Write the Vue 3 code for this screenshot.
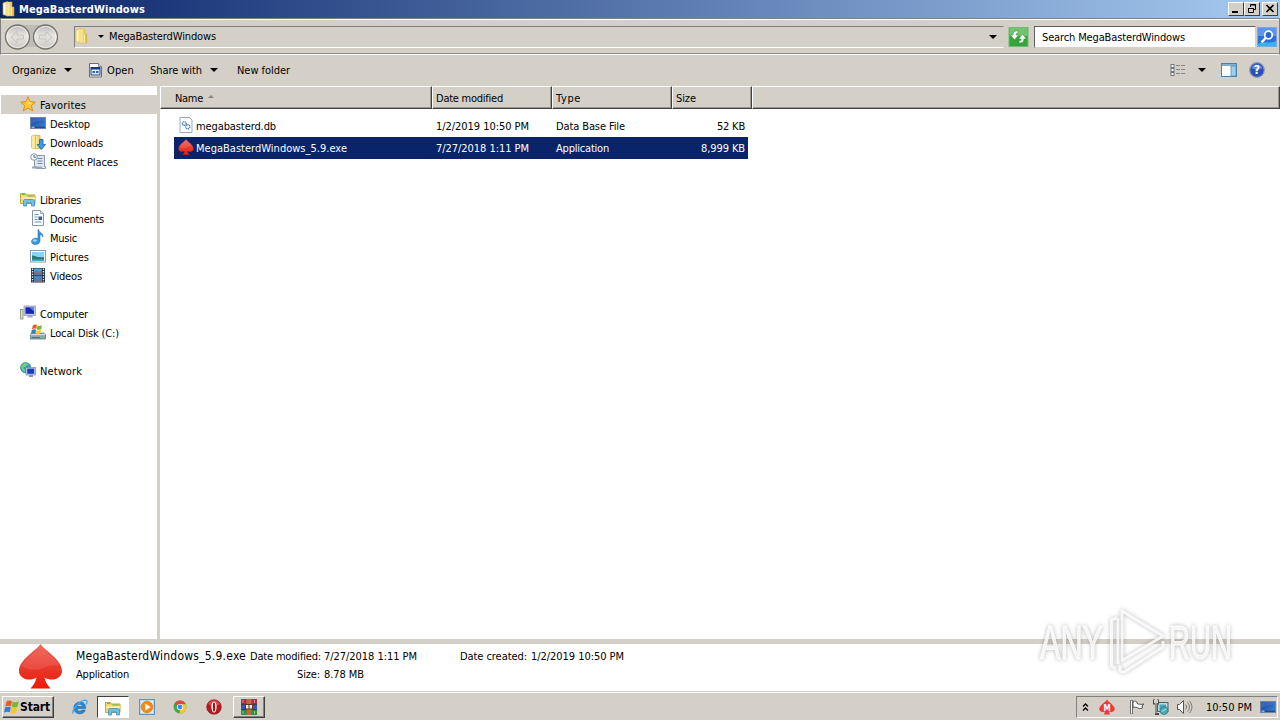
<template>
  <div class="desktop">
    <svg class="sprite" width="0" height="0">
      <defs>
        <linearGradient id="g-folder" x1="0" x2="1">
          <stop offset="0" stop-color="#fff3a8" />
          <stop offset="1" stop-color="#dcb43c" />
        </linearGradient>
        <linearGradient id="g-red" x1="0" y1="0" x2="0" y2="1">
          <stop offset="0" stop-color="#ef5b4d" />
          <stop offset="0.55" stop-color="#e8382a" />
          <stop offset="1" stop-color="#f01808" />
        </linearGradient>
        <linearGradient id="g-screen" x1="0" y1="0" x2="1" y2="1">
          <stop offset="0" stop-color="#143a90" />
          <stop offset="1" stop-color="#3c8ce0" />
        </linearGradient>
        <linearGradient id="g-ball" x1="0" y1="0" x2="0" y2="1">
          <stop offset="0" stop-color="#b9b7b3" />
          <stop offset="0.45" stop-color="#e9e7e3" />
          <stop offset="1" stop-color="#c9c6c0" />
        </linearGradient>
      </defs>
      <symbol id="folder" viewBox="0 0 16 16">
        <path d="M2 2 6.500.6v14.400L2 13.500z" fill="#fbeb9c" stroke="#dcb650" stroke-width=".6" />
        <path d="M6 1h5v5h2v9H6z" fill="url(#g-folder)" stroke="#d8b450" stroke-width=".5" />
        <path d="M3.500 3v10" stroke="#fff" stroke-width=".8" />
        <path d="M10.500 6.500v8" stroke="#fff6c0" stroke-width=".8" />
      </symbol>
      <symbol id="star" viewBox="0 0 16 16">
        <path d="M8 .8l2.100 4.800 5.200.5-3.900 3.500 1.200 5.200L8 12l-4.600 2.800 1.200-5.200L.7 6.100l5.200-.5z" fill="#ffc83a" stroke="#e08a1e" />
        <path d="M8 3l1.300 3.500 3 .4-3.300 1z" fill="#fff0a0" />
      </symbol>
      <symbol id="monitor" viewBox="0 0 16 16">
        <rect x=".5" y="2.500" width="15" height="11" fill="url(#g-screen)" stroke="#6f86a8" />
        <path d="M1 3h14v3C9 5 5 7 1 9z" fill="#4f82cf" opacity=".5" />
        <rect x="1" y="11.500" width="14" height="1.500" fill="#254c8a" />
        <rect x="1.500" y="11.500" width="3" height="1.500" fill="#78c0e8" />
      </symbol>
      <symbol id="downloads" viewBox="0 0 16 16">
        <path d="M1.500 2 6 .8v14L1.500 14z" fill="#fbeb9c" stroke="#d8b450" stroke-width=".7" />
        <path d="M5.500 1.500H10V5h2v9.500H5.500z" fill="url(#g-folder)" stroke="#d0a848" stroke-width=".7" />
        <path d="M9.500 5.500h3.500v5h2.500l-4.200 5-4.200-5h2.400z" fill="#3b9ae0" stroke="#1764a8" stroke-width=".8" />
      </symbol>
      <symbol id="recent" viewBox="0 0 16 16">
        <path d="M5.500 2.500h9v11h1v2H6v-2H4.500v-6z" fill="#dfe7f1" stroke="#8796aa" />
        <path d="M7.500 5.500h5M7.500 8h5M7.500 10.500h5" stroke="#7287a4" />
        <circle cx="4" cy="4" r="3.300" fill="#f3f6fa" stroke="#8c99aa" />
        <path d="M4 2v2.200h2" fill="none" stroke="#58708e" />
        <path d="M2 14.500h10" stroke="#9aa6b5" stroke-width="2" />
      </symbol>
      <symbol id="library" viewBox="0 0 16 16">
        <path d="M.5 2.500h5l1 1.500h8.500v8.500H.5z" fill="#f2da72" stroke="#c7a13c" />
        <path d="M2 3.500h3M7.500 5h6" stroke="#6fb34f" />
        <path d="M1 6.500h14v1.500H1z" fill="#fff3b0" />
        <path d="M4.500 8.500h8l2 1v5.500h-3v-3h-5v3h-3V9.500z" fill="#6fc0e6" stroke="#3f8fbd" stroke-width=".8" />
      </symbol>
      <symbol id="document" viewBox="0 0 16 16">
        <path d="M2.500.5h8l3 3v12h-11z" fill="#fcfdff" stroke="#8496ad" />
        <path d="M10.500.5v3h3" fill="#d6e2f0" stroke="#8496ad" stroke-width=".8" />
        <path d="M4.500 4.500h4M4.500 7h3M4.500 9.500h3M4.500 12h7" stroke="#6e93c2" />
        <rect x="8.500" y="6.500" width="3.500" height="3.500" fill="#2e5da0" />
      </symbol>
      <symbol id="music" viewBox="0 0 16 16">
        <path d="M8.500.5c.6 3 5 3.600 4.500 7.500-.8-1.800-2-2.300-3-2.400v6.200c0 2.200-1.800 3.700-4.600 3.700S1.500 14 1.500 12.500 3.200 9.200 5.700 9.200c1 0 1.800.2 2.300.4V.5z" fill="#3596dc" stroke="#1d6fb4" stroke-width=".6" />
        <ellipse cx="4.800" cy="11.500" rx="2" ry="1.200" fill="#9bd4f6" />
      </symbol>
      <symbol id="picture" viewBox="0 0 16 16">
        <rect x=".5" y="2.500" width="15" height="11.500" fill="#fff" stroke="#8b98a8" />
        <rect x="2" y="4" width="12" height="8.500" fill="#8fd2f4" />
        <path d="M2 7.500c3 0 5 2.300 12 1.500v3.500H2z" fill="#20806e" />
        <path d="M2 11.200h12v1.300H2z" fill="#2f9fd0" />
      </symbol>
      <symbol id="video" viewBox="0 0 16 16">
        <rect x="1" y="1" width="14" height="14.500" fill="#26323f" />
        <rect x="4" y="1.500" width="8" height="6.200" fill="#4aa2dc" />
        <rect x="4" y="8.700" width="8" height="6.300" fill="#3c8cc8" />
        <path d="M4 5l3-2 2 2 3-2v4.700H4zM5 11l3 2 3-3v5H5z" fill="#86647c" opacity=".8" />
        <path d="M2.500 1.500V15M13.500 1.500V15" stroke="#e8eef4" stroke-width="1.300" stroke-dasharray="1.400 1.200" />
      </symbol>
      <symbol id="computer" viewBox="0 0 16 16">
        <rect x=".5" y="4.500" width="2.500" height="9.500" fill="#d7dfd0" stroke="#7f9272" stroke-width=".8" />
        <rect x="4" y="1" width="11.500" height="9.500" fill="#c0c6dd" stroke="#8d93b5" stroke-width=".7" />
        <rect x="5.500" y="2.300" width="8.500" height="6.500" fill="#1526b0" />
        <path d="M9 2.300h5v4z" fill="#6284e8" />
        <path d="M8 10.500h4l1 2H7z" fill="#a5a8c4" />
      </symbol>
      <symbol id="flag" viewBox="0 0 16 16">
        <path d="M2.500 2.500C4.500 1 6 1.200 8 2.200L7 7.300C5 6.300 3.200 6.500 1.200 7.800z" fill="#ee5a24" />
        <path d="M8.700 2.500c2 1 3.800.9 6-.3l-1.200 5.300c-2 1.200-3.800 1.200-5.800.2z" fill="#79b829" />
        <path d="M1 8.700C3 7.400 4.800 7.300 6.800 8.300l-1.100 5C4 12.300 2 12.400 0 13.700z" fill="#2c7fd4" />
        <path d="M7.500 8.600c2 1 3.800.9 5.900-.3l-1.200 5.300c-2 1.200-3.800 1-5.800.1z" fill="#fbc51f" />
      </symbol>
      <symbol id="disk" viewBox="0 0 16 16">
        <path d="M0 10.500 2 9h11.500l2 1.500V15H0z" fill="#8fa6ad" stroke="#566f78" stroke-width=".7" />
        <path d="M.5 10.700h14.500" stroke="#e0e9ec" />
        <path d="M2 13.500h8" stroke="#4f7480" />
        <rect x="12" y="12.500" width="2" height="1.300" fill="#5ad04a" />
        <use href="#flag" x="1" y="-.5" width="12" height="12" />
      </symbol>
      <symbol id="network" viewBox="0 0 16 16">
        <circle cx="5.700" cy="5.700" r="5.200" fill="#2d9fc6" stroke="#2470a0" stroke-width=".6" />
        <path d="M1.500 3.500C4 .5 7 1 9 2 6 3 6 5 3.500 5.500 4 8 6 8 4.500 10 2 9 1 6 1.500 3.500z" fill="#76cf74" />
        <rect x="6" y="5.500" width="9.500" height="7.500" fill="#d0d7ea" stroke="#7783a8" stroke-width=".7" />
        <rect x="7.200" y="6.600" width="7" height="5.200" fill="#1440c0" />
        <path d="M9 13h4v2H9z" fill="#7f95bd" />
      </symbol>
      <symbol id="spade" viewBox="0 0 44 46">
        <path d="M22 1C24 6 43.500 16 43.500 28 43.500 36 33 39 26 34.500c1 5 3 7.500 6 11H12c3-3.500 5-6 6-11C11 39 .5 36 .5 28 .5 16 20 6 22 1z" fill="url(#g-red)" />
        <path d="M22 2c3 6 15 12 19 21-7-3-13 1-19 3S8 26 3 23C8 14 19 8 22 2z" fill="#fff" opacity=".1" />
      </symbol>
      <symbol id="dbfile" viewBox="0 0 16 16">
        <path d="M2 .5h9.500l2.500 2.500v12.500H2z" fill="#fdfdfd" stroke="#8ea0b4" stroke-width=".9" />
        <circle cx="6.300" cy="6.500" r="1.900" fill="none" stroke="#4484bb" stroke-width="1.400" stroke-dasharray="1.200 .5" />
        <circle cx="9.700" cy="9.700" r="2.100" fill="none" stroke="#4484bb" stroke-width="1.400" stroke-dasharray="1.200 .5" />
      </symbol>
      <symbol id="appwin" viewBox="0 0 16 16">
        <path d="M1.500 1.500h9l3 3v10.500h-12z" fill="#fff" stroke="#6c6c6c" />
        <path d="M10.500 1.500v3h3" fill="#ddd" stroke="#8a8a8a" />
        <rect x="3" y="5.500" width="9" height="7.500" fill="#e4ecfa" stroke="#173a88" />
        <rect x="3" y="5.500" width="9" height="2" fill="#173a88" />
        <path d="M4.500 9h2.500v2H4.500zM8 9h2.500v2H8z" fill="#3162b8" />
      </symbol>
      <symbol id="ie" viewBox="0 0 16 16">
        <path d="M13.500 9.500H5c.2 2 1.500 2.800 3 2.800 1.200 0 2-.4 2.500-1.200h2.800c-.8 2.500-2.800 3.700-5.400 3.700-3.600 0-6-2.400-6-5.800S4.300 3 8 3s5.700 2.700 5.500 6.500zM5 7.500h5.500C10.300 6 9.300 5.300 7.900 5.300S5.400 6 5 7.500z" fill="#2389dc" stroke="#1262a8" stroke-width=".6" />
        <path d="M1.200 14.500C-.5 12 6 3 12.500 1.200c3-.6 3 1.500 1.700 4.300" fill="none" stroke="#45a8ec" stroke-width="1.400" />
      </symbol>
      <symbol id="player" viewBox="0 0 16 16">
        <rect x=".5" y=".5" width="15" height="15" fill="#b9d8f4" stroke="#5a94cc" />
        <rect x="2" y="2" width="12" height="12" fill="#dcecfa" />
        <circle cx="8" cy="8" r="5.800" fill="#f48a14" stroke="#d86a08" stroke-width=".6" />
        <path d="M6.300 4.500 11.500 8l-5.200 3.500z" fill="#fff" />
      </symbol>
      <symbol id="chrome" viewBox="0 0 16 16">
        <circle cx="8" cy="8" r="6.500" fill="#3ca954" />
        <path d="M8 8 2.300 4.800A6.500 6.500 0 0 1 13.900 5.200H8z" fill="#dc4a3a" />
        <path d="M8 8V5.200h5.900A6.500 6.500 0 0 1 7.700 14.500z" fill="#f6c82e" />
        <circle cx="8" cy="8" r="3.100" fill="#fff" />
        <circle cx="8" cy="8" r="2.400" fill="#4486ea" />
      </symbol>
      <symbol id="opera" viewBox="0 0 16 16">
        <circle cx="8" cy="8" r="7.300" fill="#b41a1e" stroke="#801014" stroke-width=".6" />
        <path d="M2 5a6.600 6.600 0 0 1 12 0C11 7 5 7 2 5z" fill="#e46a68" opacity=".6" />
        <ellipse cx="8" cy="8" rx="2.600" ry="5.600" fill="#fff" />
        <ellipse cx="8" cy="8" rx="1.200" ry="4.700" fill="#9a181c" />
      </symbol>
      <symbol id="winrar" viewBox="0 0 16 16">
        <rect x="0" y="0" width="16" height="5.300" fill="#a83050" />
        <rect x="0" y="5.300" width="16" height="5.300" fill="#3a55b8" />
        <rect x="0" y="10.600" width="16" height="5.400" fill="#2f8f45" />
        <path d="M0 5.300h16M0 10.600h16" stroke="#2a2030" stroke-width=".8" />
        <rect x="5.500" y="0" width="5" height="16" fill="#c8643c" />
        <rect x="4.500" y="5.500" width="7" height="4.500" fill="#f0ecd8" stroke="#5a3828" stroke-width="1" />
        <path d="M8 6v4" stroke="#5a5040" stroke-width="1.200" />
        <path d="M2 1v3M13.500 1v3" stroke="#d88898" />
        <path d="M2 12v3M13.500 12v3" stroke="#80d08c" />
      </symbol>
    </svg>

    <header class="titlebar">
      <svg class="i16"><use href="#folder" /></svg>
      <b v-fit="126">MegaBasterdWindows</b>
      <span class="caption-btns">
        <button class="cap"><svg viewBox="0 0 14 12"><path d="M3 9h6" stroke="#000" stroke-width="2" /></svg></button>
        <button class="cap">
          <svg viewBox="0 0 14 12"><path d="M5.500 4V1.500h5v5H9M5 2h6M3.500 5.500h5v4h-5zM3 5.500h6" fill="none" stroke="#000" /></svg>
        </button>
        <button class="cap last"><svg viewBox="0 0 14 12"><path d="M3.500 2l7 7M10.500 2l-7 7" stroke="#000" stroke-width="1.600" /></svg></button>
      </span>
    </header>

    <div class="address-band">
      <svg class="nav-balls" viewBox="0 0 58 30">
        <rect x="10" y="3" width="36" height="22" rx="9" fill="#bfbcb6" />
        <g v-for="x in [14.500, 42.500]" :key="x">
          <circle :cx="x" cy="15" r="12" fill="url(#g-ball)" stroke="#77746f" stroke-width="1.300" />
          <circle :cx="x" cy="15" r="10.500" fill="none" stroke="#f5f4f2" stroke-width="1" opacity=".8" />
        </g>
        <path d="M8 15l6-5.500v3.500h6.500v4H14v3.500z" fill="#e0deda" stroke="#c6c3bd" />
        <path d="M49 15l-6-5.500v3.500h-6.500v4H43v3.500z" fill="#e0deda" stroke="#c6c3bd" />
      </svg>
      <div class="address">
        <svg class="i16"><use href="#folder" /></svg>
        <i class="tri small"></i>
        <span v-fit="107">MegaBasterdWindows</span>
        <i class="tri end"></i>
      </div>
      <svg class="refresh" viewBox="0 0 20 20">
        <rect x=".5" y=".5" width="19" height="19" fill="#36a43c" stroke="#74b874" />
        <rect x="1" y="1" width="18" height="8" fill="#70c56e" />
        <path d="M9.500 4C6 3.500 4.500 5 4.500 8H2l4 5 4-5H7.500c0-1.300.6-1.800 2-1.800z" fill="#fff" stroke="#248a2a" stroke-width=".5" />
        <path d="M10.500 16c3.500.5 5-1 5-4H18l-4-5-4 5h2.500c0 1.300-.6 1.800-2 1.800z" fill="#f2fff0" stroke="#248a2a" stroke-width=".5" />
      </svg>
      <div class="search"><span v-fit="143">Search MegaBasterdWindows</span></div>
      <svg class="search-btn" viewBox="0 0 20 20">
        <rect x=".5" y=".5" width="19" height="19" fill="#2a6fe0" stroke="#7fa6e0" />
        <rect x="1" y="1" width="18" height="8" fill="#5d94f0" />
        <path d="M1 19h18v-5C12 17 6 14 1 17z" fill="#35b4f0" />
        <circle cx="11.500" cy="8" r="3.800" fill="#2c62cc" stroke="#fff" stroke-width="1.800" />
        <path d="M8.700 11 4.500 15.300" stroke="#fff" stroke-width="2.400" />
      </svg>
    </div>

    <div class="toolbar">
      <span v-fit="44">Organize</span><i class="tri"></i>
      <svg class="i16 open"><use href="#appwin" /></svg>
      <span v-fit="27">Open</span>
      <span v-fit="52" class="share">Share with</span><i class="tri"></i>
      <span v-fit="53" class="newfolder">New folder</span>
      <span class="tools">
        <svg width="16" height="14" viewBox="0 0 16 14">
          <g v-for="y in [1, 5, 9]" :key="y">
            <rect x="1" :y="y + .5" width="3" height="3" fill="#fff" stroke="#70747c" />
            <path :d="`M6 ${y + 1.500}h4M11 ${y + 1.500}h4`" stroke="#85888f" />
          </g>
        </svg>
        <i class="tri views"></i>
        <svg class="pane" width="16" height="14" viewBox="0 0 16 14">
          <rect x=".5" y=".5" width="15" height="13" fill="#fff" stroke="#4f7fa4" />
          <rect x="1" y="1" width="14" height="2" fill="#86afcc" />
          <rect x="10" y="3" width="5" height="10" fill="#9bd0ee" stroke="#4f8fba" stroke-width=".8" />
        </svg>
        <svg class="help" width="16" height="16" viewBox="0 0 16 16">
          <circle cx="8" cy="8" r="7.300" fill="#2850b8" stroke="#8b96b4" stroke-width="1.200" />
          <path d="M2.500 6a6 6 0 0 1 11 0C10 8 6 8 2.500 6z" fill="#7e9ce6" opacity=".7" />
          <text x="8" y="12.300" text-anchor="middle" class="qm">?</text>
        </svg>
      </span>
    </div>

    <main class="body">
      <nav class="tree">
        <section v-for="group in tree" :key="group.label">
          <div class="node root" :class="{ active: group.active }">
            <svg class="i16"><use :href="'#' + group.icon" /></svg>
            <span v-fit="group.w">{{ group.label }}</span>
          </div>
          <div v-for="item in group.items" :key="item.label" class="node">
            <svg class="i16"><use :href="'#' + item.icon" /></svg>
            <span v-fit="item.w">{{ item.label }}</span>
          </div>
        </section>
      </nav>

      <div class="files">
        <div class="grid head">
          <div class="th first"><span v-fit="28">Name</span><i class="sort"></i></div>
          <div class="th"><span v-fit="67">Date modified</span></div>
          <div class="th"><span v-fit="25">Type</span></div>
          <div class="th"><span v-fit="20">Size</span></div>
          <div class="th"></div>
        </div>
        <div v-for="f in files" :key="f.name" class="grid row" :class="{ selected: f.selected }">
          <div class="td name">
            <svg class="i16"><use :href="'#' + f.icon" /></svg>
            <span v-fit="f.nameW">{{ f.name }}</span>
          </div>
          <div class="td"><span v-fit="93">{{ f.date }}</span></div>
          <div class="td"><span v-fit="f.typeW">{{ f.type }}</span></div>
          <div class="td size"><span v-fit="f.sizeW">{{ f.size }}</span></div>
        </div>
      </div>
    </main>

    <footer class="details">
      <svg class="big-icon"><use href="#spade" /></svg>
      <div class="lines">
        <div class="line">
          <span v-fit="170" class="file-name">MegaBasterdWindows_5.9.exe</span>
          <span v-fit="71" class="k1">Date modified:</span>
          <span v-fit="93" class="v">7/27/2018 1:11 PM</span>
          <span v-fit="67" class="k2">Date created:</span>
          <span v-fit="93" class="v">1/2/2019 10:50 PM</span>
        </div>
        <div class="line">
          <span v-fit="53">Application</span>
          <span v-fit="23" class="k3">Size:</span>
          <span v-fit="40" class="v">8.78 MB</span>
        </div>
      </div>
    </footer>

    <div class="taskbar">
      <button class="start"><svg class="i16"><use href="#flag" /></svg><b v-fit="30">Start</b></button>
      <div v-for="t in tasks" :key="t.icon" class="task" :class="t.state">
        <svg class="i16"><use :href="'#' + t.icon" /></svg>
      </div>
      <div class="tray">
        <svg class="chev" width="7" height="9" viewBox="0 0 7 9"><path d="M1 3.500l2.500-2.500L6 3.500M1 7.500 3.500 5 6 7.500" fill="none" stroke="#000" stroke-width="1.300" /></svg>
        <svg class="mega" width="16" height="16" viewBox="0 0 16 16">
          <path d="M8 .5C9 3 15.700 6 15.700 10c0 3-3.700 3.500-5.700 2.500l1 3H5l1-3C4 13.500.3 13 .3 10 .3 6 7 3 8 .5z" fill="#ee3a34" />
          <text x="8" y="11.500" text-anchor="middle" class="m">M</text>
        </svg>
        <svg class="tflag" width="16" height="16" viewBox="0 0 16 16">
          <path d="M2.500 1v14" stroke="#555" stroke-width="2.600" /><path d="M2.500 1.500v13" stroke="#fff" />
          <path d="M4 2.500c2-1 3 0 4 .5v1.500c2 1 4 1 7 .5l-2 2 .5 2C11 10 9 9.500 8 8.500 6.500 8 5.500 8 4 8.500z" fill="#fff" stroke="#555" />
        </svg>
        <svg class="tnet" width="16" height="16" viewBox="0 0 16 16">
          <rect x="4.500" y="3.500" width="10.500" height="9" fill="#b7dbe2" stroke="#47626c" />
          <rect x="6.500" y="5.500" width="6.500" height="5" fill="#4da9b6" />
          <path d="M1 .5v4h4v-4M3 4.500V15h3" fill="none" stroke="#444" stroke-width="2" />
          <path d="M1.500 1v3h3V1M3 4.500v10" fill="none" stroke="#fff" stroke-width=".8" />
          <circle cx="11" cy="11.500" r="4" fill="#48aab0" stroke="#25767c" stroke-width=".7" />
          <path d="M8.500 12c2 1 3-2 5-2" fill="none" stroke="#c4ecdc" />
        </svg>
        <svg class="tsound" width="16" height="16" viewBox="0 0 16 16">
          <path d="M.5 5.500H2.500l4-4v13l-4-4H.5z" fill="#fff" stroke="#555" />
          <path d="M8.500 5.500c1.300 1.500 1.300 3.500 0 5M10.500 3.500c2.500 2.500 2.500 6.500 0 9M12.500 2c3.200 3.500 3.200 8.500 0 12" fill="none" stroke="#777" />
        </svg>
        <span v-fit="46" class="clock">10:50 PM</span>
        <svg class="i16"><use href="#monitor" /></svg>
      </div>
    </div>

    <svg class="watermark" width="248" height="90" viewBox="0 0 248 90">
      <g class="wm">
        <text x="10" y="54" textLength="63" lengthAdjust="spacingAndGlyphs">ANY</text>
        <text x="139" y="54" textLength="63" lengthAdjust="spacingAndGlyphs">RUN</text>
        <path d="M92 6 133 31 92 55.500z" />
        <path d="M87 13 81.500 15v46l4 2.500M88 13v46M90 60.500v5q2 2.500 5 1L133 42v-6" />
      </g>
    </svg>
  </div>
</template>

<script setup>
// stretches or tightens a label to its nominal pixel width
const vFit = {
  mounted(el, { value }) {
    const natural = el.getBoundingClientRect().width
    const gap = (value - natural) / el.textContent.length
    el.style.letterSpacing = gap.toFixed(3) + 'px'
  }
}

const tree = [
  {
    label: 'Favorites', icon: 'star', w: 46, active: true,
    items: [
      { label: 'Desktop', icon: 'monitor', w: 40 },
      { label: 'Downloads', icon: 'downloads', w: 53 },
      { label: 'Recent Places', icon: 'recent', w: 68 }
    ]
  },
  {
    label: 'Libraries', icon: 'library', w: 41,
    items: [
      { label: 'Documents', icon: 'document', w: 54 },
      { label: 'Music', icon: 'music', w: 27 },
      { label: 'Pictures', icon: 'picture', w: 39 },
      { label: 'Videos', icon: 'video', w: 32 }
    ]
  },
  {
    label: 'Computer', icon: 'computer', w: 48,
    items: [{ label: 'Local Disk (C:)', icon: 'disk', w: 69 }]
  },
  { label: 'Network', icon: 'network', w: 42, items: [] }
]

const files = [
  {
    name: 'megabasterd.db', icon: 'dbfile', nameW: 80,
    date: '1/2/2019 10:50 PM', type: 'Data Base File', typeW: 69, size: '52 KB', sizeW: 28
  },
  {
    name: 'MegaBasterdWindows_5.9.exe', icon: 'spade', nameW: 151,
    date: '7/27/2018 1:11 PM', type: 'Application', typeW: 53, size: '8,999 KB', sizeW: 44, selected: true
  }
]

const tasks = [
  { icon: 'ie' },
  { icon: 'library', state: 'pressed' },
  { icon: 'player' },
  { icon: 'chrome' },
  { icon: 'opera' },
  { icon: 'winrar', state: 'raised' }
]
</script>

<style>
html,
body {
  margin: 0;
  overflow: hidden;
}
</style>

<style scoped>
.desktop {
  position: relative;
  display: flex;
  flex-direction: column;
  width: 1280px;
  height: 720px;
  overflow: hidden;
  background: #d4d0c8;
  color: #000;
  font-family: Tahoma, "DejaVu Sans Condensed", "DejaVu Sans", sans-serif;
  font-size: 11px;
  line-height: 14px;
  white-space: nowrap;
}

.desktop * {
  box-sizing: border-box;
}

.sprite {
  position: absolute;
}

svg {
  display: block;
  flex-shrink: 0;
}

span,
b {
  display: block;
  flex-shrink: 0;
}

button {
  padding: 0;
  margin: 0;
  font: inherit;
  color: inherit;
}

.i16 {
  width: 16px;
  height: 16px;
  flex-shrink: 0;
}

.tri {
  width: 0;
  height: 0;
  flex-shrink: 0;
  border: 4px solid transparent;
  border-top-color: #000;
  border-bottom: 0;
}

.tri.small {
  border-width: 3px 3px 0;
}

/* title bar */
.titlebar {
  height: 18px;
  flex-shrink: 0;
  display: flex;
  align-items: center;
  padding: 0 2px 0 1px;
  gap: 2px;
  background: linear-gradient(90deg, #0a246a, #a6caf0);
  color: #fff;
}

.titlebar b {
  padding-top: 2px;
}

.caption-btns {
  margin-left: auto;
  display: flex;
}

.cap {
  width: 16px;
  height: 14px;
  background: #d4d0c8;
  border: 1px solid;
  border-color: #fff #404040 #404040 #fff;
}

.cap.last {
  margin-left: 2px;
}

.cap svg {
  width: 14px;
  height: 12px;
}

/* address */
.address-band {
  height: 37px;
  flex-shrink: 0;
  display: flex;
  align-items: center;
  padding: 0 1px 0 3px;
  border-top: 1px solid #808080;
  border-left: 1px solid #808080;
  border-right: 1px solid #808080;
  border-bottom: 1px solid #fff;
  box-shadow: inset 0 1px #fff, inset 0 -1px #8e8b85;
}

.nav-balls {
  width: 58px;
  height: 30px;
  margin-left: -1px;
}

.address {
  width: 930px;
  height: 22px;
  margin-left: 13px;
  display: flex;
  align-items: center;
  border: 1px solid;
  border-color: #808080 #d4d0c8 #fff #808080;
}

.address .i16 {
  margin: 0 0 2px -1px;
}

.address .small {
  margin: 0 5px 1px 8px;
}

.address .end {
  margin-left: auto;
  margin-right: 6px;
}

.refresh {
  width: 21px;
  height: 20px;
  margin-left: 4px;
}

.search {
  width: 222px;
  height: 22px;
  margin-left: 5px;
  padding: 4px 0 0 7px;
  display: flex;
  background: #fff;
  border: 1px solid;
  border-color: #606060 #d4d0c8 #d4d0c8 #606060;
}

.search-btn {
  width: 20px;
  height: 20px;
  margin-left: 1px;
}

/* toolbar */
.toolbar {
  height: 31px;
  flex-shrink: 0;
  display: flex;
  align-items: center;
  padding-left: 12px;
}

.toolbar .tri {
  margin: 0 0 1px 8px;
}

.toolbar .open {
  margin: 0 3px 2px 16px;
}

.share {
  margin-left: 16px;
}

.newfolder {
  margin-left: 19px;
}

.tools {
  margin-left: auto;
  display: flex;
  align-items: center;
  padding: 0 15px 1px 0;
}

.toolbar .views {
  margin: 0 0 0 12px;
}

.pane {
  margin-left: 15px;
}

.help {
  margin-left: 12px;
}

.qm {
  fill: #fff;
  font-size: 12px;
  font-weight: bold;
}

/* folder tree */
.body {
  flex: 1;
  min-height: 0;
  display: flex;
}

.tree {
  width: 157px;
  margin-right: 3px;
  padding-top: 9px;
  background: #fff;
}

.tree section {
  margin-bottom: 19px;
}

.node {
  height: 19px;
  display: flex;
  align-items: center;
  gap: 4px;
  padding-left: 30px;
}

.node .i16,
.td .i16 {
  margin-bottom: 2px;
}

.node span,
.td span {
  padding-top: 2px;
}

.node.root {
  margin-left: 1px;
  padding-left: 19px;
}

.node.active {
  background: #d4d0c8;
}

/* file list */
.files {
  flex: 1;
  background: #fff;
}

.grid {
  display: grid;
  grid-template-columns: 272px 120px 120px 80px 1fr;
}

.head {
  height: 23px;
  margin-bottom: 6px;
  background: #d4d0c8;
}

.th {
  display: flex;
  align-items: center;
  padding: 2px 0 0 3px;
  border: 1px solid;
  border-color: #fff #404040 #404040 #fff;
  box-shadow: inset -1px -1px #9c9890;
}

.th.first {
  padding-left: 14px;
}

.sort {
  margin: 0 0 4px 5px;
  border: 3px solid transparent;
  border-top: 0;
  border-bottom-color: #8c8880;
}

.row {
  width: 574px;
  height: 22px;
  margin-left: 14px;
  grid-template-columns: 258px 120px 120px 76px;
}

.td {
  display: flex;
  align-items: center;
  padding-left: 4px;
}

.td.name {
  gap: 2px;
}

.td.size {
  justify-content: flex-end;
  padding-right: 3px;
}

.selected {
  background: #0a246a;
  color: #fff;
}

/* details pane */
.details {
  height: 53px;
  flex-shrink: 0;
  display: flex;
  border-top: 5px solid #d4d0c8;
  border-bottom: 1px solid #d4d0c8;
  background: #fff;
}

.big-icon {
  width: 45px;
  height: 46px;
  margin: -1px 13px 0 18px;
}

.line {
  display: flex;
  height: 18px;
  padding-top: 6px;
}

.file-name {
  margin-top: -1px;
  font-size: 12px;
}

.k1 {
  margin-left: 4px;
}

.k2 {
  margin-left: 43px;
}

.k3 {
  margin-left: 168px;
}

.v {
  margin-left: 4px;
}

.k1 + .v {
  margin-left: 3px;
}

/* taskbar */
.taskbar {
  height: 28px;
  flex-shrink: 0;
  display: flex;
  align-items: center;
  border-top: 1px solid #fff;
  padding: 1px 2px 0;
}

.start {
  width: 52px;
  height: 22px;
  margin-right: 10px;
  display: flex;
  align-items: center;
  background: #d4d0c8;
  border: 1px solid;
  border-color: #fff #404040 #404040 #fff;
  box-shadow: inset -1px -1px #808080;
}

.start .i16 {
  margin: 0 0 0 1px;
}

.start b {
  font-size: 12px;
}

.task {
  width: 32px;
  height: 22px;
  margin-right: 2px;
  display: flex;
  align-items: center;
  justify-content: center;
}

.task:nth-of-type(1),
.task:nth-of-type(3) {
  margin-right: 1px;
}

.task:nth-of-type(5) {
  margin-right: 3px;
}

.pressed {
  background: #fff;
  border: 1px solid;
  border-color: #404040 #fff #fff #404040;
}

.pressed .i16 {
  margin-top: 1px;
}

.raised {
  border: 1px solid;
  border-color: #fff #404040 #404040 #fff;
  box-shadow: inset -1px -1px #808080;
}

.tray {
  width: 202px;
  height: 22px;
  margin-left: auto;
  display: flex;
  align-items: center;
  padding-left: 5px;
  border: 1px solid;
  border-color: #808080 #fff #fff #808080;
}

.mega {
  margin-left: 10px;
}

.m {
  fill: #fff;
  font-size: 8px;
  font-weight: bold;
}

.tflag {
  margin-left: 14px;
}

.tnet {
  margin-left: 8px;
}

.tsound {
  margin-left: 8px;
}

.clock {
  margin: 0 8px 0 13px;
  padding-top: 2px;
}

/* watermark */
.watermark {
  position: absolute;
  left: 1030px;
  top: 605px;
  pointer-events: none;
  filter: drop-shadow(0 0 2px rgba(0, 0, 0, 0.34));
}

.wm text,
.wm path {
  fill: none;
  stroke: rgba(255, 255, 255, 0.8);
  stroke-width: 3px;
  stroke-linejoin: round;
}

.wm text {
  font-family: "Liberation Sans", Arial, sans-serif;
  font-size: 48px;
  fill: rgba(255, 255, 255, 0.8);
  stroke-width: 1px;
}
</style>
